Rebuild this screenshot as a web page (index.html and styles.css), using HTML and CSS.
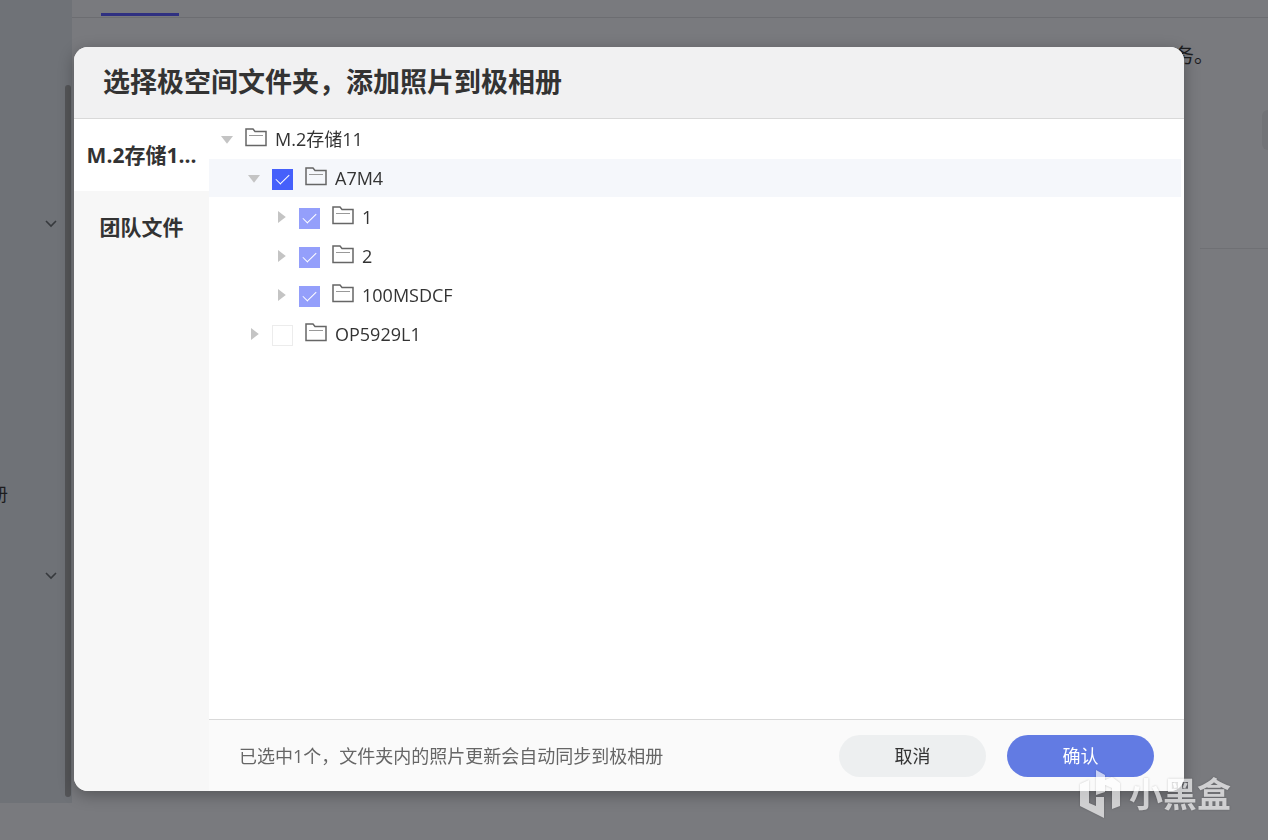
FILE: index.html
```html
<!DOCTYPE html>
<html lang="zh-CN">
<head>
  <meta charset="UTF-8">
  <title>极相册</title>
  <link rel="stylesheet" href="styles.css">
</head>
<body>

  <svg class="sprite" aria-hidden="true">
    <symbol id="folder" viewBox="0 0 22 19">
      <path d="M1 17.5V1h7l2 2.5h11v14z" fill="none" stroke="#666" stroke-width="1.5"/>
      <path d="M4 7.5h14" stroke="#999" stroke-width="1"/>
    </symbol>
    <symbol id="arrow" viewBox="0 0 12 8">
      <path d="M1 1l5 5 5-5" fill="none" stroke="#36393d" stroke-width="1.6"/>
    </symbol>
  </svg>

  <div class="page">
    <aside class="menu">
      <div class="menu-list">
        <svg class="menu-arrow"><use href="#arrow"/></svg>
        <span class="menu-text">册</span>
        <svg class="menu-arrow"><use href="#arrow"/></svg>
      </div>
      <div class="scroll"></div>
    </aside>
    <main class="content">
      <div class="tabs"><div class="tab-line"></div></div>
      <p class="notice">务。</p>
      <div class="side-btn"></div>
      <div class="line"></div>
    </main>
  </div>

  <div class="overlay">
    <div class="dialog" role="dialog" aria-labelledby="titulo">
      <header class="dialog-head">
        <h1 id="titulo">选择极空间文件夹，添加照片到极相册</h1>
      </header>
      <div class="dialog-body">
        <nav class="spaces">
          <button class="space active">M.2存储1...</button>
          <button class="space">团队文件</button>
        </nav>
        <section class="right">
          <ul class="tree">
            <li>
              <div class="row">
                <span class="caret open"></span>
                <span class="name"><svg class="folder"><use href="#folder"/></svg>M.2存储11</span>
              </div>
              <ul>
                <li>
                  <div class="row selected">
                    <span class="caret open"></span>
                    <input type="checkbox" id="a7m4" checked>
                    <label class="name" for="a7m4"><svg class="folder"><use href="#folder"/></svg>A7M4</label>
                  </div>
                  <ul>
                    <li class="row">
                      <span class="caret"></span>
                      <input type="checkbox" id="f1" checked disabled>
                      <label class="name" for="f1"><svg class="folder"><use href="#folder"/></svg>1</label>
                    </li>
                    <li class="row">
                      <span class="caret"></span>
                      <input type="checkbox" id="f2" checked disabled>
                      <label class="name" for="f2"><svg class="folder"><use href="#folder"/></svg>2</label>
                    </li>
                    <li class="row">
                      <span class="caret"></span>
                      <input type="checkbox" id="f100" checked disabled>
                      <label class="name" for="f100"><svg class="folder"><use href="#folder"/></svg>100MSDCF</label>
                    </li>
                  </ul>
                </li>
                <li class="row">
                  <span class="caret"></span>
                  <input type="checkbox" id="op">
                  <label class="name" for="op"><svg class="folder"><use href="#folder"/></svg>OP5929L1</label>
                </li>
              </ul>
            </li>
          </ul>
          <footer class="dialog-foot">
            <p>已选中1个，文件夹内的照片更新会自动同步到极相册</p>
            <button class="btn">取消</button>
            <button class="btn primary">确认</button>
          </footer>
        </section>
      </div>
    </div>
  </div>

  <div class="watermark">
    <svg class="logo" viewBox="0 0 42 48" fill="#fff">
      <path d="M1 14l9-4v23l7 3v-9h8v21L1 36z"/>
      <path d="M17 0l9 5v5l7-3 8 6v23l-8 3V18l-7-3v7l-9 3z"/>
    </svg>
    <span>小黑盒</span>
  </div>

</body>
</html>
```
FILE: styles.css
```css
* {
  box-sizing: border-box;
}
body {
  margin: 0;
  height: 100vh;
  overflow: hidden;
  background: #797a7e;
  color: #333;
  font-family: "Open Sans", "Noto Sans CJK SC", sans-serif;
  font-size: 18px;
}
h1, p, ul {
  margin: 0;
  padding: 0;
}
ul {
  list-style: none;
}
button {
  border: none;
  font-family: inherit;
  cursor: pointer;
}
.sprite {
  display: none;
}

/* page behind the dialog */
.page {
  display: flex;
  height: 100vh;
}
.menu {
  display: flex;
  width: 72px;
  margin-bottom: 37px;
  background: #6f7277;
}
.menu-list {
  flex: 1;
  padding-top: 220px;
}
.menu-arrow {
  display: block;
  width: 12px;
  height: 8px;
  margin-left: 45px;
}
.menu-text {
  display: flex;
  justify-content: flex-end;
  width: 8px;
  margin: 252px 0 64px;
  overflow: hidden;
  color: #1c1d1f;
  line-height: 28px;
  white-space: nowrap;
}
.scroll {
  width: 6px;
  margin: 85px 1px 6px 0;
  border-radius: 3px;
  background: #545558;
}
.content {
  flex: 1;
}
.tabs {
  height: 18px;
  padding: 13px 0 0 29px;
  border-bottom: 1px solid #6c6d71;
}
.tab-line {
  width: 78px;
  height: 3px;
  background: #2f3081;
}
.notice {
  margin: 24px 54px 0 0;
  color: #1c1d1f;
  font-size: 20px;
  line-height: 28px;
  text-align: right;
}
.side-btn {
  width: 6px;
  height: 40px;
  margin: 40px 0 0 auto;
  border-radius: 6px 0 0 6px;
  background: #727377;
}
.line {
  width: 68px;
  height: 1px;
  margin: 98px 0 0 auto;
  background: #6f7074;
}

/* dialog */
.overlay {
  position: fixed;
  inset: 0;
  display: flex;
  padding: 47px 84px 49px 74px;
}
.dialog {
  flex: 1;
  display: flex;
  flex-direction: column;
  overflow: hidden;
  border-radius: 14px;
  background: #fff;
  box-shadow: 0 4px 16px rgba(0, 0, 0, 0.3);
}
.dialog-head {
  padding: 0 29px 2px;
  border-bottom: 1px solid #d9d9d9;
  background: #f1f1f2;
}
.dialog-head h1 {
  font-size: 27px;
  line-height: 69px;
}
.dialog-body {
  flex: 1;
  display: flex;
}
.spaces {
  width: 135px;
  background: #f7f7f7;
}
.space {
  display: block;
  width: 100%;
  height: 72px;
  padding: 0 0 2px;
  background: none;
  color: #333;
  font-size: 21px;
  font-weight: bold;
}
.space.active {
  background: #fff;
}
.right {
  flex: 1;
  display: flex;
  flex-direction: column;
}
.tree {
  flex: 1;
  padding: 1px 3px 0 0;
}
.row {
  display: flex;
  align-items: center;
  gap: 12px;
  height: 38px;
  margin-bottom: 1px;
  padding-left: 12px;
}
.tree ul .row {
  padding-left: 39px;
}
.tree ul ul .row {
  padding-left: 66px;
}
.row.selected {
  background: #f5f7fb;
}
.caret {
  width: 12px;
  height: 12px;
  background: #c4c4c4;
  clip-path: polygon(25% 0, 90% 50%, 25% 100%);
}
.caret.open {
  clip-path: polygon(0 25%, 100% 25%, 50% 90%);
}
.row input {
  appearance: none;
  display: grid;
  place-items: center;
  width: 21px;
  height: 21px;
  margin: 2px 0 0;
  border: 1px solid #ececec;
  background: #fff;
}
.row input:checked {
  border: none;
  background: #4560fb;
}
.row input:disabled {
  background: #949ffb;
}
.row input:checked::after {
  content: "";
  width: 12px;
  height: 6px;
  margin-bottom: 3px;
  border: solid #fff;
  border-width: 0 0 1px 1px;
  transform: rotate(-45deg);
}
.name {
  display: flex;
  align-items: center;
  gap: 8px;
  padding-bottom: 1px;
  line-height: 26px;
}
.folder {
  width: 22px;
  height: 19px;
  margin-bottom: 2px;
}
.dialog-foot {
  display: flex;
  align-items: center;
  gap: 21px;
  height: 72px;
  padding: 0 30px;
  border-top: 1px solid #d9d9d9;
  background: #fafafa;
}
.dialog-foot p {
  flex: 1;
  padding-bottom: 2px;
  color: #666;
}
.btn {
  width: 147px;
  height: 42px;
  padding: 0 0 1px;
  border-radius: 21px;
  background: #edeff0;
  color: #333;
  font-size: 18px;
}
.btn.primary {
  background: #627be3;
  color: #fff;
}

.watermark {
  position: fixed;
  right: 37px;
  bottom: 22px;
  display: flex;
  align-items: center;
  gap: 8px;
  opacity: 0.65;
  color: #fff;
  font-size: 34px;
  font-weight: bold;
  line-height: 48px;
  pointer-events: none;
  filter: drop-shadow(0 0 1px rgba(0, 0, 0, 0.3));
}
.logo {
  width: 42px;
  height: 48px;
}
```
